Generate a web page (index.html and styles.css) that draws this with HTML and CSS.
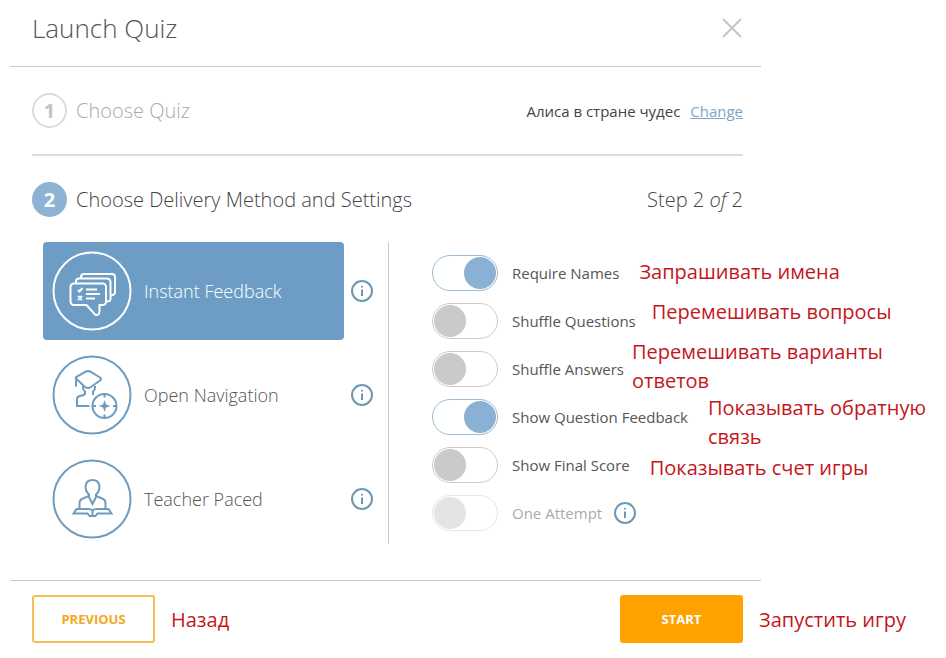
FILE: index.html
```
<!DOCTYPE html>
<html lang="en">
  <head>
    <meta charset="utf-8" />
    <title>Launch Quiz</title>

    <link rel="stylesheet" href="styles.css">
  </head>

  <body>
    <svg class="sprite" aria-hidden="true">
      <symbol id="info" viewBox="0 0 22 22">
        <circle cx="11" cy="11" r="10" />
        <path d="M11 9.500v6.500M11 6v1.500" />
      </symbol>
    </svg>

    <main class="dialog">
      <header class="header">
        <h1>Launch Quiz</h1>
        <button class="close" aria-label="Close">
          <svg width="20" height="20" viewBox="0 0 20 20">
            <path d="M1 1l18 18M19 1L1 19" />
          </svg>
        </button>
      </header>

      <section class="content">
        <div class="step step-done">
          <span class="number">1</span>
          <h2>Choose Quiz</h2>
          <p class="quiz-name">Алиса в стране чудес <a href="#">Change</a></p>
        </div>

        <div class="step">
          <span class="number">2</span>
          <h2>Choose Delivery Method and Settings</h2>
          <p class="progress">Step 2 <em>of</em> 2</p>
        </div>

        <div class="settings">
          <div class="methods">
            <div class="method-row">
              <label class="method">
                <input type="radio" name="method" checked />
                <svg class="method-icon" viewBox="0 0 80 80">
                  <circle cx="40" cy="40" r="38.500" />
                  <path d="M22 32.500h28.500a3.500 3.500 0 0 1 3.500 3.500v14.500a3.500 3.500 0 0 1-3.500 3.500H47.500v6.500q-.5 5-4.500 3L34.500 54H22a3.500 3.500 0 0 1-3.500-3.500V36a3.500 3.500 0 0 1 3.500-3.500z" />
                  <path d="M24 32v-1.500a3 3 0 0 1 3-3h28a3.500 3.500 0 0 1 3.500 3.500v17q0 2.500-4 2.500" />
                  <path d="M29 27v-1a3 3 0 0 1 3-3h28a3 3 0 0 1 3 3v15q0 3-4 3.500" />
                  <path d="M26 39l1.500 1.500 3-3.500M26 45l4 4M30 45l-4 4M34 38.500h11M34 43h14M34 47.500h9" />
                </svg>
                <span>Instant Feedback</span>
              </label>
              <button class="info" aria-label="About Instant Feedback"><svg><use href="#info" /></svg></button>
            </div>

            <div class="method-row">
              <label class="method">
                <input type="radio" name="method" />
                <svg class="method-icon" viewBox="0 0 80 80">
                  <circle cx="40" cy="40" r="38.500" />
                  <path d="M24 31.500V24M24 23.500q-1-1 1-2l9-5q2-1 4 0l10 6q2 1.500 0 3l-9 6.500q-3 2-6 0z" />
                  <path d="M31 31v2q0 2 2 3.500v2.500q-1.500 1.500-5 2-3 .5-3 3V51h12.500M43 31v2q0 2-2 3.500V40" />
                  <circle cx="52.500" cy="51" r="12" />
                  <path d="M52.500 39v3.500M52.500 59.500V63M40.500 51H44M61 51h3.500" />
                  <path class="solid" d="M52.500 45l1.500 4.500 4.500 1.500-4.500 1.500-1.500 4.500-1.500-4.500-4.500-1.500 4.500-1.500z" />
                </svg>
                <span>Open Navigation</span>
              </label>
              <button class="info" aria-label="About Open Navigation"><svg><use href="#info" /></svg></button>
            </div>

            <div class="method-row">
              <label class="method">
                <input type="radio" name="method" />
                <svg class="method-icon" viewBox="0 0 80 80">
                  <circle cx="40" cy="40" r="38.500" />
                  <path d="M37 37.500v-2C32 31 32 21 40.500 21s8.500 10 3.500 14.500v2" />
                  <path d="M27.500 49.500v-5q0-4 3.500-5l5.500-2.500 4 8 4-8 5.500 2.500q3.500 1 3.500 5v5" />
                  <path d="M24.500 50h12q3 0 4 2 1-2 4-2h12l3 4.500H45.500l-2 2.500h-6l-2-2.500H21.500zM40.500 52v5" />
                </svg>
                <span>Teacher Paced</span>
              </label>
              <button class="info" aria-label="About Teacher Paced"><svg><use href="#info" /></svg></button>
            </div>
          </div>

          <div class="options">
            <div class="option">
              <label><input type="checkbox" class="toggle" checked />Require Names</label>
              <span class="note note-names">Запрашивать имена</span>
            </div>
            <div class="option">
              <label><input type="checkbox" class="toggle" />Shuffle Questions</label>
              <span class="note note-questions">Перемешивать вопросы</span>
            </div>
            <div class="option">
              <label><input type="checkbox" class="toggle" />Shuffle Answers</label>
              <span class="note note-answers">Перемешивать варианты<br>ответов</span>
            </div>
            <div class="option">
              <label><input type="checkbox" class="toggle" checked />Show Question Feedback</label>
              <span class="note note-feedback">Показывать обратную<br>связь</span>
            </div>
            <div class="option">
              <label><input type="checkbox" class="toggle" />Show Final Score</label>
              <span class="note note-score">Показывать счет игры</span>
            </div>
            <div class="option">
              <label><input type="checkbox" class="toggle" disabled />One Attempt</label>
              <button class="info" aria-label="About One Attempt"><svg><use href="#info" /></svg></button>
            </div>
          </div>
        </div>
      </section>

      <footer class="footer">
        <div class="action">
          <button class="btn btn-outline">PREVIOUS</button>
          <span class="note note-action">Назад</span>
        </div>
        <div class="action">
          <button class="btn">START</button>
          <span class="note note-action">Запустить игру</span>
        </div>
      </footer>
    </main>
  </body>
</html>
```
FILE: styles.css
```
* {
  box-sizing: border-box;
}
body {
  margin: 0;
  background: white;
  color: #555;
  font-family: "Open Sans", "Noto Sans", sans-serif;
}
h1,
h2,
p {
  margin: 0;
  font-weight: 300;
}
button {
  padding: 0;
  border: none;
  background: none;
  font-family: inherit;
  cursor: pointer;
}
svg {
  display: block;
  fill: none;
  stroke: currentColor;
  stroke-width: 2;
}
.sprite {
  position: absolute;
  width: 0;
  height: 0;
}
.dialog {
  margin: 0 185px 0 10px;
}
.header {
  display: flex;
  align-items: center;
  justify-content: space-between;
  height: 67px;
  padding: 0 19px 10px 22px;
  border-bottom: 1px solid #c8c8c8;
}
h1 {
  font-size: 26px;
}
.close {
  color: #c4c4c4;
}
.content {
  padding: 0 18px 0 22px;
}
.step {
  display: flex;
  align-items: center;
  height: 86px;
  gap: 9px;
  color: #444;
}
.step-done {
  height: 89px;
  border-bottom: 2px solid #dadcde;
}
.number {
  width: 35px;
  height: 35px;
  border: 2px solid #8cb3d4;
  border-radius: 50%;
  background: #8cb3d4;
  color: white;
  font-size: 20px;
  font-weight: 700;
  line-height: 31px;
  text-align: center;
}
.step-done .number {
  border-color: #dcdcdc;
  background: white;
  color: #c4c4c4;
}
h2,
.progress {
  font-size: 20px;
}
.step-done h2 {
  color: #aaa;
}
.quiz-name,
.progress {
  margin-left: auto;
}
.quiz-name {
  font-size: 15px;
  font-weight: 400;
}
.quiz-name a {
  margin-left: 6px;
  color: #7ba6c9;
}
.settings {
  display: flex;
  padding-bottom: 32px;
}
.methods {
  display: flex;
  flex: 1;
  flex-direction: column;
  gap: 6px;
  padding-left: 11px;
}
.method-row {
  display: flex;
  align-items: center;
  gap: 7px;
  padding-right: 15px;
}
.method {
  display: flex;
  flex: 1;
  align-items: center;
  gap: 12px;
  height: 98px;
  padding-left: 9px;
  border-radius: 4px;
  font-size: 18px;
  font-weight: 300;
  cursor: pointer;
}
.method input {
  position: absolute;
  opacity: 0;
}
.method-icon {
  width: 80px;
  height: 80px;
  color: #6f9cbe;
}
.method-icon .solid {
  fill: currentColor;
  stroke: none;
}
.method:has(input:checked) {
  background: #6d9dc4;
  color: white;
}
.method input:checked + .method-icon {
  color: white;
}
.info {
  width: 22px;
  height: 22px;
  color: #6d97b5;
}
.info svg {
  width: 22px;
  height: 22px;
}
.options {
  width: 355px;
  height: 302px;
  padding: 13px 0 0 43px;
  border-left: 1px solid #c8c8c8;
}
.option {
  position: relative;
  display: flex;
  align-items: center;
  width: max-content;
  height: 36px;
  margin-bottom: 12px;
  gap: 12px;
}
.option label {
  display: flex;
  align-items: center;
  gap: 14px;
  font-size: 15px;
  cursor: pointer;
}
.option:has(:disabled) label {
  opacity: 0.5;
}
.toggle {
  display: flex;
  appearance: none;
  width: 66px;
  height: 36px;
  margin: 0;
  padding: 1px;
  border: 1px solid #ccc;
  border-radius: 18px;
}
.toggle::before {
  content: "";
  width: 32px;
  height: 32px;
  border-radius: 50%;
  background: #cacaca;
}
.toggle:checked {
  justify-content: flex-end;
  border-color: #9dbad2;
}
.toggle:checked::before {
  background: #8ab0d3;
}
/* red translations lie over the dialog */
.note {
  position: absolute;
  left: 100%;
  color: #c4161c;
  font-family: "Open Sans", "Noto Sans", sans-serif;
  font-size: 20px;
  line-height: 29px;
  white-space: nowrap;
}
.note-names {
  top: 2px;
  margin-left: 20px;
}
.note-questions {
  top: -6px;
  margin-left: 16px;
}
.note-answers {
  top: -14px;
  margin-left: 8px;
}
.note-feedback {
  top: -6px;
  margin-left: 20px;
}
.note-score {
  top: 6px;
  margin-left: 20px;
}
.note-action {
  top: 10px;
  margin-left: 16px;
}
.footer {
  display: flex;
  justify-content: space-between;
  padding: 14px 18px 14px 22px;
  border-top: 1px solid #c8c8c8;
}
.action {
  position: relative;
}
.btn {
  width: 123px;
  height: 48px;
  border: 2px solid #ffa200;
  border-radius: 3px;
  background: #ffa200;
  color: white;
  font-size: 13px;
  font-weight: 700;
}
.btn-outline {
  border-color: #f5bd55;
  background: white;
  color: #f5a81c;
}
```
